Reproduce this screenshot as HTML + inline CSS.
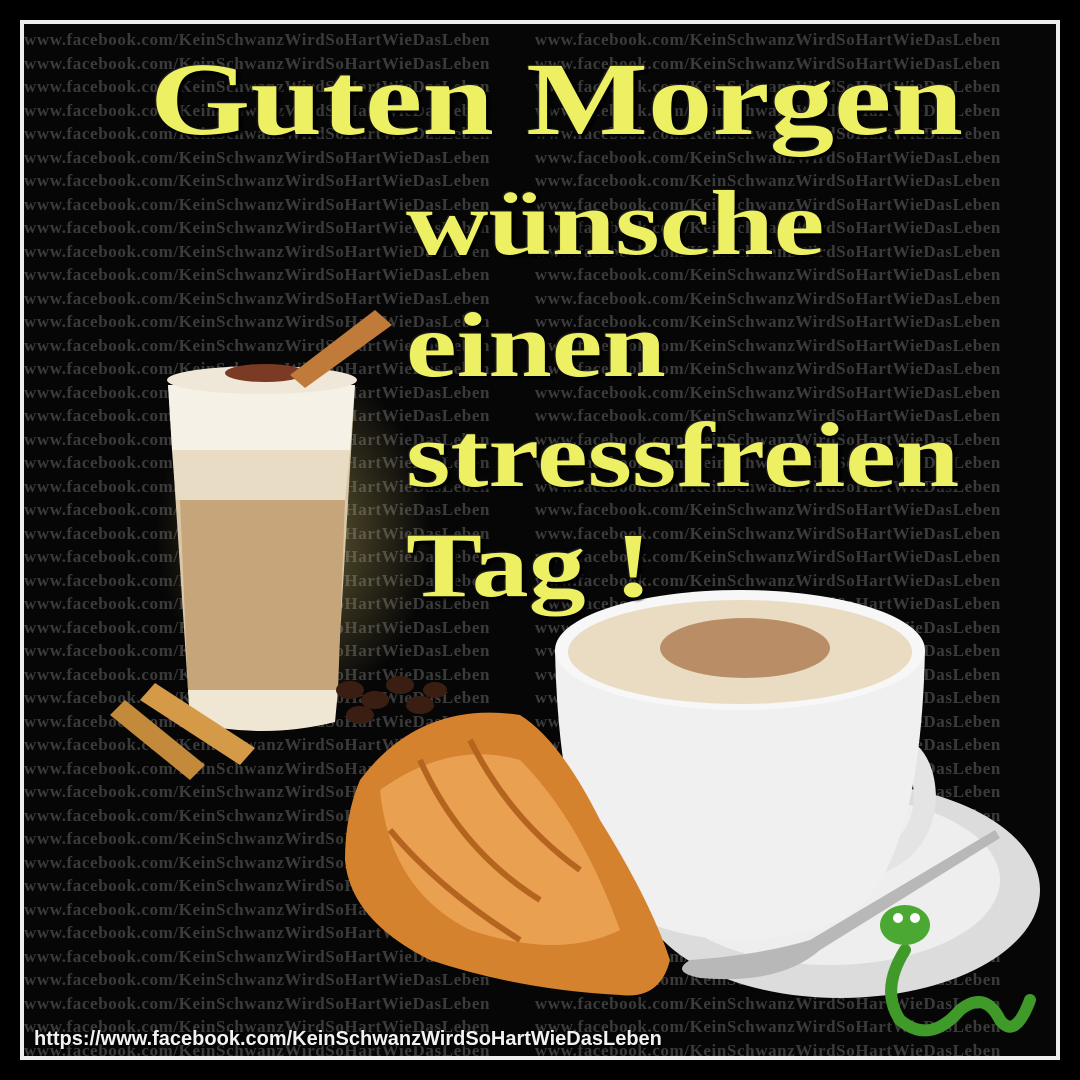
<!DOCTYPE html>
<html><head><meta charset="utf-8"><style>
*{margin:0;padding:0;box-sizing:border-box}
body{width:1080px;height:1080px;background:#000;position:relative;overflow:hidden;font-family:"Liberation Serif",serif}
.frame{position:absolute;left:20px;top:20px;width:1040px;height:1040px;border:4px solid #eee;overflow:hidden;background:#060606}
.bg{position:absolute;left:0;top:4px;width:1100px;color:#3b3b3b;font:bold 17px/23.5px "Liberation Serif",serif;white-space:nowrap;letter-spacing:0.6px;word-spacing:40px}
.t{position:absolute;color:#eef064;font-weight:bold;font-family:"Liberation Serif",serif;text-shadow:3px 3px 2px #000,-1px -1px 1px #222;white-space:nowrap;transform:scaleX(1.24);transform-origin:left top}
.url{position:absolute;left:10px;top:1004px;color:#f2f2f2;font:bold 20px "Liberation Sans",sans-serif;text-shadow:1px 1px 2px #000}
</style></head><body>
<div class="frame">
<div class="bg" id="bg"></div>
<div style="position:absolute;left:120px;top:320px;width:300px;height:380px;background:radial-gradient(ellipse at center,rgba(230,210,120,.45),rgba(0,0,0,0) 65%)"></div>
<svg width="1040" height="1040" style="position:absolute;left:-4px;top:-4px" viewBox="20 20 1040 1040">
<path d="M168 385 L355 385 L335 720 Q262 738 190 720 Z" fill="#d8c8a8"/>
<path d="M168 385 L355 385 L350 450 L172 450 Z" fill="#f6f1e6"/>
<path d="M172 450 L350 450 L345 500 L176 500 Z" fill="#e8dcc4"/>
<path d="M180 500 L345 500 L338 690 L188 690 Z" fill="#c7a57a"/>
<path d="M188 690 L338 690 L335 722 Q262 740 190 722 Z" fill="#efe6d4"/>
<ellipse cx="262" cy="380" rx="95" ry="14" fill="#efe7d8"/>
<ellipse cx="265" cy="373" rx="40" ry="9" fill="#7a3a24"/>
<path d="M290 375 L375 310 L392 325 L305 388 Z" fill="#c07a3a"/>
<path d="M110 715 L190 780 L205 765 L125 700 Z" fill="#c48a3c"/>
<path d="M140 700 L240 765 L255 748 L155 683 Z" fill="#d59a48"/>
<g fill="#3a1e12"><ellipse cx="350" cy="690" rx="14" ry="9"/><ellipse cx="375" cy="700" rx="14" ry="9"/><ellipse cx="400" cy="685" rx="14" ry="9"/><ellipse cx="420" cy="705" rx="14" ry="9"/><ellipse cx="360" cy="715" rx="14" ry="9"/><ellipse cx="435" cy="690" rx="12" ry="8"/></g>
<ellipse cx="840" cy="890" rx="200" ry="108" fill="#dcdcdc"/>
<ellipse cx="830" cy="880" rx="170" ry="85" fill="#eeeeee"/>
<path d="M860 740 Q925 735 925 800 Q920 860 850 870" stroke="#e4e4e4" stroke-width="22" fill="none"/>
<path d="M555 650 Q560 880 640 920 Q740 960 840 920 Q920 880 925 650 Z" fill="#f0f0f0"/>
<ellipse cx="740" cy="650" rx="185" ry="60" fill="#f7f7f7"/>
<ellipse cx="740" cy="652" rx="172" ry="52" fill="#e9dcc2"/>
<ellipse cx="745" cy="648" rx="85" ry="30" fill="#9a5a2a" opacity=".6"/>
<path d="M690 960 Q760 955 810 940 L995 830 L1000 838 L820 950 Q780 985 700 978 Q670 972 690 960 Z" fill="#b8b8b8"/>
<path d="M360 780 Q420 700 520 715 Q560 740 600 820 Q650 900 670 960 Q660 1000 620 995 Q520 990 430 960 Q350 920 345 860 Q345 815 360 780 Z" fill="#d4822e"/>
<path d="M380 790 Q450 740 520 760 Q580 820 620 930 Q560 960 470 930 Q390 890 380 790 Z" fill="#e9a050"/>
<path d="M420 760 Q460 850 540 900 M470 740 Q510 820 580 870 M390 830 Q440 890 520 940" stroke="#b56420" stroke-width="6" fill="none"/>
<path d="M905 950 Q880 990 900 1020 Q930 1045 960 1010 Q985 990 1000 1020 Q1015 1040 1030 1000" stroke="#3f9a2a" stroke-width="12" fill="none" stroke-linecap="round"/>
<ellipse cx="905" cy="925" rx="25" ry="20" fill="#4aa833"/>
<circle cx="898" cy="918" r="5" fill="#fff"/><circle cx="915" cy="918" r="5" fill="#fff"/>
</svg>
<div class="t" style="left:126px;top:16px;font-size:104px">Guten Morgen</div>
<div class="t" style="left:382px;top:146px;font-size:92px">wünsche</div>
<div class="t" style="left:382px;top:268px;font-size:92px">einen</div>
<div class="t" style="left:382px;top:378px;font-size:92px">stressfreien</div>
<div class="t" style="left:382px;top:488px;font-size:92px">Tag !</div>
<div class="url">https://www.facebook.com/KeinSchwanzWirdSoHartWieDasLeben</div>
</div>
<script>
var s="";for(var i=0;i<45;i++){s+="www.facebook.com/KeinSchwanzWirdSoHartWieDasLeben www.facebook.com/KeinSchwanzWirdSoHartWieDasLeben<br>";}
document.getElementById("bg").innerHTML=s;
</script>
</body></html>
